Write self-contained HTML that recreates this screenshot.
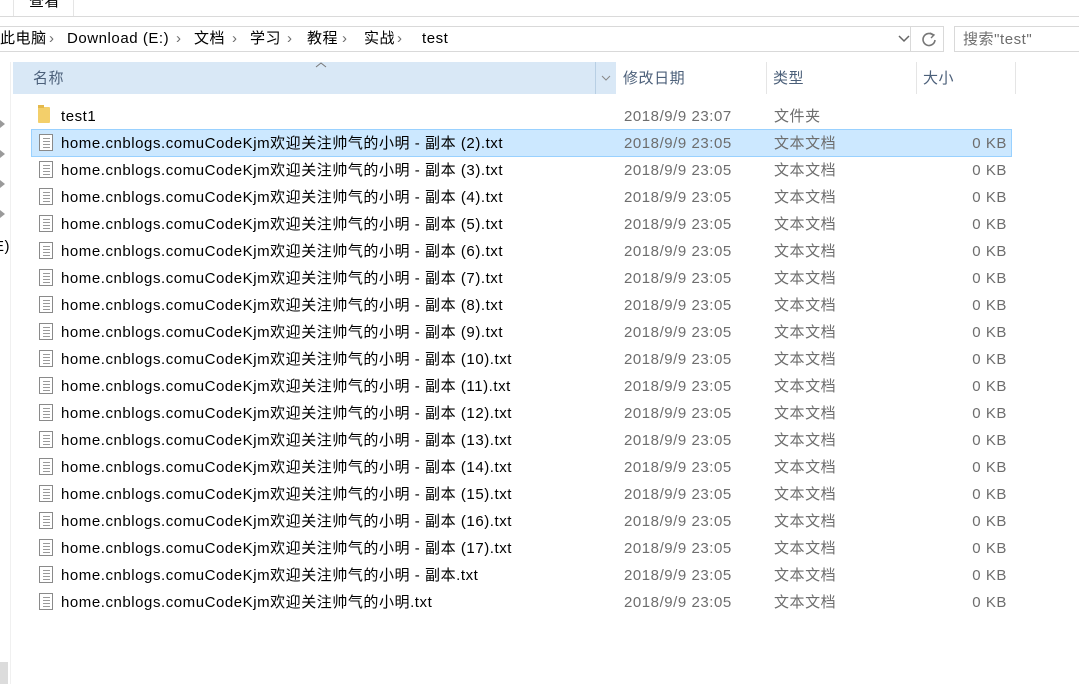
<!DOCTYPE html>
<html><head><meta charset="utf-8"><style>
*{margin:0;padding:0;box-sizing:border-box}
body{width:1079px;height:684px;overflow:hidden;background:#fff;font-family:"Liberation Sans","Noto Sans CJK SC",sans-serif;font-size:15px;color:#000;position:relative;letter-spacing:0.55px}
.a{position:absolute;white-space:nowrap;line-height:20px;height:20px}
.g{color:#6d6d6d}
.ico{position:absolute;width:14px;height:17px;border:1px solid #8a8a8a;background:#fff}
.ico i{position:absolute;left:3px;width:7px;height:1px;background:#9a9a9a}
.arr{position:absolute;left:0;width:0;height:0;border-top:4px solid transparent;border-bottom:4px solid transparent;border-left:5px solid #9a9a9a}
.ln{position:absolute}
</style></head><body>
<div class="ln" style="left:13px;top:0;width:1px;height:16px;background:#e5e5e5"></div>
<div class="ln" style="left:73px;top:0;width:1px;height:16px;background:#e5e5e5"></div>
<div class="a" style="left:29px;top:-8px">查看</div>
<div class="ln" style="left:0;top:16px;width:1079px;height:1px;background:#dadada"></div>
<div class="ln" style="left:-2px;top:26px;width:946px;height:26px;border:1px solid #d9d9d9"></div>
<div class="ln" style="left:910px;top:27px;width:1px;height:24px;background:#d9d9d9"></div>
<div class="a" style="left:0;top:29px">此电脑</div>
<div class="a" style="left:67px;top:29px">Download (E:)</div>
<div class="a g" style="left:49px;top:29px">›</div>
<div class="a g" style="left:176px;top:29px">›</div>
<div class="a" style="left:194px;top:29px">文档</div>
<div class="a g" style="left:232px;top:29px">›</div>
<div class="a" style="left:250px;top:29px">学习</div>
<div class="a g" style="left:287px;top:29px">›</div>
<div class="a" style="left:307px;top:29px">教程</div>
<div class="a g" style="left:342px;top:29px">›</div>
<div class="a" style="left:364px;top:29px">实战</div>
<div class="a g" style="left:397px;top:29px">›</div>
<div class="a" style="left:422px;top:29px">test</div>
<svg class="ln" style="left:897px;top:34px" width="14" height="10"><path d="M2 2 L7 7 L12 2" stroke="#666" stroke-width="1.5" fill="none"/></svg>
<svg class="ln" style="left:920px;top:30px" width="18" height="18"><path d="M13 5 A6 6 0 1 0 15 10" stroke="#777" stroke-width="1.6" fill="none"/><path d="M10 3 L14 5 L11 8" stroke="#777" stroke-width="1.4" fill="none"/></svg>
<div class="ln" style="left:954px;top:26px;width:130px;height:26px;border:1px solid #d9d9d9"></div>
<div class="a g" style="left:963px;top:30px">搜索"test"</div>
<div class="ln" style="left:10px;top:62px;width:1px;height:622px;background:#f0f0f0"></div>
<div class="arr" style="top:120px"></div>
<div class="arr" style="top:150px"></div>
<div class="arr" style="top:180px"></div>
<div class="arr" style="top:210px"></div>
<div class="a" style="left:-6px;top:237px">E)</div>
<div class="ln" style="left:0;top:662px;width:8px;height:22px;background:#dcdcdc"></div>
<div class="ln" style="left:13px;top:62px;width:603px;height:32px;background:#d9e8f6"></div>
<div class="ln" style="left:595px;top:62px;width:1px;height:32px;background:#b8cfe4"></div>
<svg class="ln" style="left:315px;top:61px" width="12" height="8"><path d="M1 6 L6 2 L11 6" stroke="#777" fill="none"/></svg>
<svg class="ln" style="left:600px;top:74px" width="12" height="8"><path d="M2 2 L6 6 L10 2" stroke="#888" fill="none"/></svg>
<div class="a" style="left:33px;top:69px;color:#4c607a">名称</div>
<div class="a" style="left:623px;top:69px;color:#4c607a">修改日期</div>
<div class="ln" style="left:766px;top:62px;width:1px;height:32px;background:#e5e5e5"></div>
<div class="a" style="left:773px;top:69px;color:#4c607a">类型</div>
<div class="ln" style="left:916px;top:62px;width:1px;height:32px;background:#e5e5e5"></div>
<div class="a" style="left:923px;top:69px;color:#4c607a">大小</div>
<div class="ln" style="left:1015px;top:62px;width:1px;height:32px;background:#e5e5e5"></div>
<div class="ln" style="left:38px;top:107px;width:12px;height:16px;background:#f3cf6a;border-radius:1px"></div>
<div class="ln" style="left:38px;top:105px;width:6px;height:3px;background:#e4b94c"></div>
<div class="a" style="left:61px;top:107px">test1</div>
<div class="a g" style="left:624px;top:107px">2018/9/9 23:07</div>
<div class="a g" style="left:774px;top:107px">文件夹</div>
<div class="ln" style="left:31px;top:129px;width:981px;height:28px;background:#cce8ff;border:1px solid #99d1ff"></div>
<div id="rows"></div>
<script>
var n=["- 副本 (2)","- 副本 (3)","- 副本 (4)","- 副本 (5)","- 副本 (6)","- 副本 (7)","- 副本 (8)","- 副本 (9)","- 副本 (10)","- 副本 (11)","- 副本 (12)","- 副本 (13)","- 副本 (14)","- 副本 (15)","- 副本 (16)","- 副本 (17)","- 副本",""];
var h="";
for(var i=0;i<n.length;i++){var y=134+i*27;
h+='<div class="ico" style="left:39px;top:'+y+'px"><i style="top:3px"></i><i style="top:6px"></i><i style="top:9px"></i><i style="top:12px"></i></div>';
h+='<div class="a" style="left:61px;top:'+y+'px">home.cnblogs.comuCodeKjm欢迎关注帅气的小明'+(n[i]?' '+n[i]:'')+'.txt</div>';
h+='<div class="a g" style="left:624px;top:'+y+'px">2018/9/9 23:05</div>';
h+='<div class="a g" style="left:774px;top:'+y+'px">文本文档</div>';
h+='<div class="a g" style="right:72px;top:'+y+'px">0 KB</div>';}
document.getElementById("rows").innerHTML=h;
</script>
</body></html>
